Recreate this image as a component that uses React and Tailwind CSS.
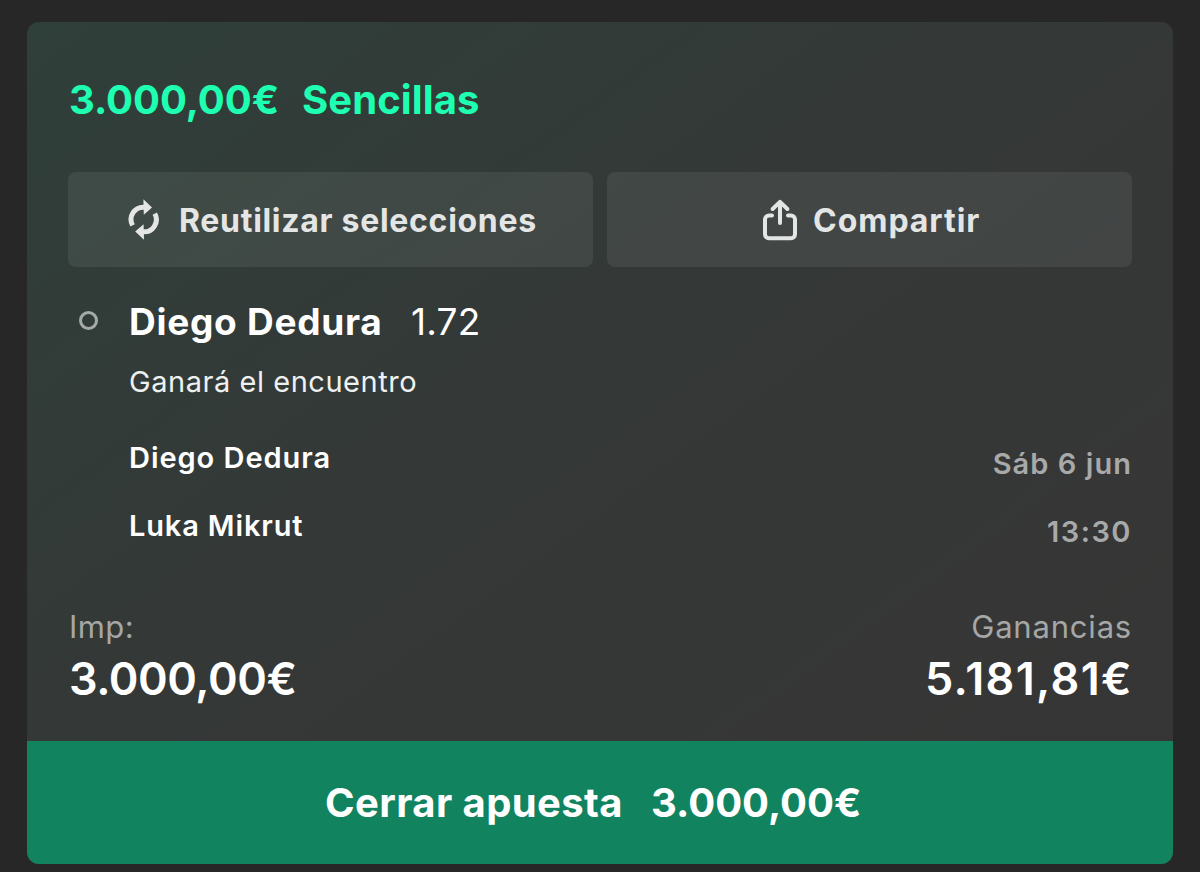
import React from 'react';

function RefreshIcon() {
  return (
    <svg width="32" height="42" viewBox="0 0 32 42" fill="none" className="shrink-0">
      <path d="M4.6 26.4A12.3 12.3 0 0 1 16.5 8.2" stroke="#e4e6e5" strokeWidth="5" />
      <path d="M15.4 0.2L24 8.4L15.8 15.8Z" fill="#e4e6e5" />
      <path d="M26.8 14.6A12.3 12.3 0 0 1 14.9 32.8" stroke="#e4e6e5" strokeWidth="5" />
      <path d="M16 40.8L7.2 32.6L15.6 25.2Z" fill="#e4e6e5" />
    </svg>
  );
}

function ShareIcon() {
  return (
    <svg
      width="36"
      height="42"
      viewBox="0 0 36 42"
      fill="none"
      stroke="#e4e6e5"
      strokeWidth="4"
      strokeLinecap="round"
      strokeLinejoin="round"
      className="shrink-0"
    >
      <path d="M10 16.4H7A4 4 0 0 0 3 20.4V35.2A4 4 0 0 0 7 39.2H29A4 4 0 0 0 33 35.2V20.4A4 4 0 0 0 29 16.4H26" />
      <path d="M18 24V3.4M10.6 10L18 2.9L25.4 10" />
    </svg>
  );
}

const buttonClass =
  "flex h-[95px] items-center rounded-lg bg-[#f5fff8]/7 text-[32px] leading-[40px] font-bold text-[#e4e6e5]";

export default function App() {
  return (
    <main className="h-[872px] w-[1200px] overflow-hidden bg-[#272727] px-[27px] pt-[22px] font-['Inter',sans-serif] text-white">
      <article className="flex h-[842px] flex-col overflow-hidden rounded-xl bg-linear-to-br from-[#2f3f3a] via-[#343837] via-45% to-[#373535]">
        <div className="flex flex-1 flex-col px-[41px] pt-[54px]">
          <header className="flex h-12 text-[40px] leading-[48px] font-bold whitespace-nowrap text-[#1effb2]">
            <span className="w-[234px] pl-px tracking-[-0.05px]">3.000,00€</span>
            <span className="tracking-[0.1px]">Sencillas</span>
          </header>

          <div className="mt-[48px] grid grid-cols-2 gap-3.5">
            <button className={buttonClass + " pl-[60px]"}>
              <RefreshIcon />
              <span className="mt-0.5 ml-[19px] tracking-[0.7px] whitespace-nowrap">Reutilizar selecciones</span>
            </button>
            <button className={buttonClass + " pl-[155px]"}>
              <ShareIcon />
              <span className="mt-0.5 ml-[15px] tracking-[0.96px]">Compartir</span>
            </button>
          </div>

          <section className="mt-[33px] flex">
            <span className="mt-[11px] ml-[11px] size-[19px] shrink-0 rounded-full border-3 border-[#a5aaa8]" />
            <div className="ml-[31px] flex-1">
              <h2 className="flex text-[37px] leading-[44px] whitespace-nowrap">
                <span className="w-[282px] font-bold tracking-[0.72px]">Diego Dedura</span>
                <span className="tracking-[0.2px]">1.72</span>
              </h2>
              <p className="mt-5 text-[29px] leading-9 tracking-[0.54px] text-[#eef1f0]">Ganará el encuentro</p>
              <div className="mt-10 flex justify-between text-[29px] leading-9">
                <div className="flex flex-col gap-8 font-semibold">
                  <span className="tracking-[0.95px]">Diego Dedura</span>
                  <span className="tracking-[0.85px]">Luka Mikrut</span>
                </div>
                <div className="flex flex-col items-end gap-8 pt-1.5 font-semibold text-[#a8a9a9]">
                  <span className="tracking-[1.05px]">Sáb 6 jun</span>
                  <span className="tracking-[1.5px]">13:30</span>
                </div>
              </div>
            </div>
          </section>

          <section className="mt-[58px] flex justify-between">
            <div>
              <p className="pl-px text-[31px] leading-[38px] tracking-[0.4px] text-[#a5a7a6]">Imp:</p>
              <p className="mt-[7px] pl-px text-[45px] leading-[52px] font-semibold tracking-[-0.45px]">3.000,00€</p>
            </div>
            <div className="text-right">
              <p className="text-[31px] leading-[38px] tracking-[0.8px] text-[#a5a7a6]">Ganancias</p>
              <p className="-mr-px mt-[7px] text-[45px] leading-[52px] font-semibold tracking-[1.35px]">5.181,81€</p>
            </div>
          </section>
        </div>

        <button className="flex h-[123px] shrink-0 bg-[#12835f] pt-[38px] pl-[298px] text-[40px] leading-[48px] font-bold whitespace-nowrap">
          <span className="w-[326px] text-left tracking-[0.4px]">Cerrar apuesta</span>
          <span>3.000,00€</span>
        </button>
      </article>
    </main>
  );
}
